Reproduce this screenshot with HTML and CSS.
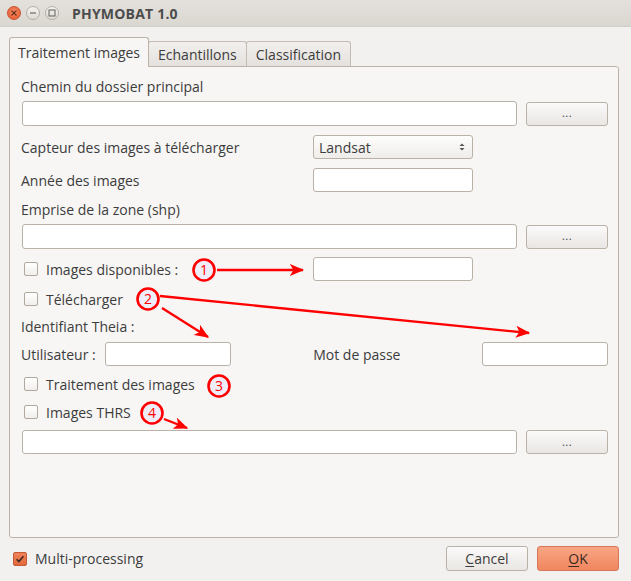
FILE: index.html
```html
<!DOCTYPE html>
<html lang="fr">
<head>
<meta charset="utf-8">
<title>PHYMOBAT 1.0</title>
<link rel="stylesheet" href="styles.css">
</head>
<body>
<div class="window">
  <div class="titlebar">
    <div class="wbtns">
      <span class="wbtn close"><svg width="14" height="14" viewBox="0 0 14 14"><path d="M4.5 4.5l5 5M9.5 4.5l-5 5" stroke="#5a2a1a" stroke-width="1.3" stroke-linecap="round"/></svg></span>
      <span class="wbtn"><svg width="14" height="14" viewBox="0 0 14 14"><path d="M3.5 7h7" stroke="#5a5752" stroke-width="1.2"/></svg></span>
      <span class="wbtn"><svg width="14" height="14" viewBox="0 0 14 14"><rect x="3.5" y="3.5" width="7" height="7" fill="none" stroke="#5a5752" stroke-width="1.1"/></svg></span>
    </div>
    <div class="title">PHYMOBAT 1.0</div>
  </div>

  <div class="body">
    <div class="tabs">
      <div class="tab active">Traitement images</div>
      <div class="tab">Echantillons</div>
      <div class="tab">Classification</div>
    </div>
    <div class="panel">
      <div class="row lbl r1">Chemin du dossier principal</div>
      <div class="row field r2">
        <div class="input wide"></div>
        <div class="button dots">...</div>
      </div>
      <div class="row field r3">
        <div class="lcol">Capteur des images à télécharger</div>
        <div class="combo">Landsat<span class="spin"><svg width="8" height="12" viewBox="0 0 8 12"><path d="M1.5 5L4 2.5 6.5 5z" fill="#555"/><path d="M1.5 7L4 9.5 6.5 7z" fill="#555"/></svg></span></div>
      </div>
      <div class="row field r4">
        <div class="lcol">Année des images</div>
        <div class="input mid"></div>
      </div>
      <div class="row lbl r5">Emprise de la zone (shp)</div>
      <div class="row field r6">
        <div class="input wide"></div>
        <div class="button dots">...</div>
      </div>
      <div class="row field r7">
        <div class="lcol"><span class="cb"></span>Images disponibles :</div>
        <div class="input mid"></div>
      </div>
      <div class="row lbl r8"><span class="cb"></span>Télécharger</div>
      <div class="row lbl r9">Identifiant Theia :</div>
      <div class="row field r10">
        <div class="ucol">Utilisateur :</div>
        <div class="input small"></div>
        <div class="mcol">Mot de passe</div>
        <div class="input small"></div>
      </div>
      <div class="row lbl r11"><span class="cb"></span>Traitement des images</div>
      <div class="row lbl r12"><span class="cb"></span>Images THRS</div>
      <div class="row field r13">
        <div class="input wide"></div>
        <div class="button dots">...</div>
      </div>
    </div>

    <div class="footer">
      <div class="multi"><span class="cb checked"><svg width="14" height="14" viewBox="0 0 14 14"><path d="M3 7.2l2.7 2.8L11 3.8" fill="none" stroke="#3b2a22" stroke-width="1.8"/></svg></span>Multi-processing</div>
      <div class="actions">
        <div class="button dlg"><span class="u">C</span>ancel</div>
        <div class="button dlg ok"><span class="u">O</span>K</div>
      </div>
    </div>
  </div>

  <svg class="annot" width="631" height="581" viewBox="0 0 631 581">
    <defs>
      <marker id="ah" viewBox="0 0 12 10" refX="11" refY="5" markerWidth="6" markerHeight="5" orient="auto" markerUnits="strokeWidth">
        <path d="M0 0L12 5 0 10 3 5z" fill="#f00"/>
      </marker>
    </defs>
    <g stroke="#f00" stroke-width="2.4" fill="none" marker-end="url(#ah)">
      <line x1="217" y1="270" x2="303" y2="270"/>
      <line x1="160" y1="296" x2="529" y2="333"/>
      <line x1="162" y1="308" x2="208" y2="337"/>
      <line x1="164" y1="419" x2="187" y2="428"/>
    </g>
    <g stroke="#f00" stroke-width="2.6" fill="#eeeefa">
      <circle cx="204" cy="270" r="10.5"/>
      <circle cx="148" cy="299" r="10.5"/>
      <circle cx="219" cy="386" r="10.5"/>
      <circle cx="152" cy="413" r="10.5"/>
    </g>
    <g fill="#f00" font-family="Open Sans, sans-serif" font-size="14" text-anchor="middle">
      <text x="204" y="275">1</text>
      <text x="148" y="304">2</text>
      <text x="219" y="391">3</text>
      <text x="152" y="418">4</text>
    </g>
  </svg>
</div>
</body>
</html>
```
FILE: styles.css
```css
* { box-sizing: border-box; }
html, body { margin: 0; padding: 0; }
body {
  width: 631px;
  height: 581px;
  overflow: hidden;
  background: #f2f1f0;
  font-family: "Open Sans", "Noto Sans", sans-serif;
  font-size: 14px;
  color: #3c3c3c;
}
.window { position: relative; width: 631px; height: 581px; }

.titlebar {
  height: 27px;
  display: flex;
  align-items: center;
  background: linear-gradient(#e4e1dc, #dad6d0);
  border-bottom: 1px solid #d2cec8;
}
.wbtns { display: flex; gap: 5px; margin-left: 7px; }
.wbtn {
  width: 14px; height: 14px;
  border-radius: 50%;
  border: 1px solid #b3aea6;
  background: linear-gradient(#f4f2ef, #dedbd6);
  display: flex; align-items: center; justify-content: center;
}
.wbtn svg { display: block; }
.wbtn.close {
  background: radial-gradient(circle at 50% 40%, #f58a63, #e4582c);
  border-color: #c9502c;
}
.title {
  margin-left: 13px;
  font-weight: bold;
  color: #4c4c4c;
  font-size: 14px;
  letter-spacing: 0.2px;
}

.body { padding: 10px 12px 0 9px; }

.tabs { display: flex; align-items: flex-end; height: 29px; }
.tab {
  height: 25px;
  padding: 0 9px;
  display: flex; align-items: center;
  border: 1px solid #c4bcb3;
  border-bottom: none;
  border-radius: 3px 3px 0 0;
  background: linear-gradient(#f2f0ee, #e4e1dd);
  margin-left: -1px;
}
.tab.active {
  height: 30px;
  margin-left: 0;
  margin-bottom: -1px;
  background: #f7f6f5;
  border-color: #bcb2a7;
  padding: 0 8px;
  position: relative;
  z-index: 1;
}

.panel {
  height: 472px;
  border: 1px solid #bcb2a7;
  border-radius: 0 3px 3px 3px;
  background: #f7f6f5;
  padding: 8px 10px 0 11px;
  display: flex;
  flex-direction: column;
}
.row { display: flex; align-items: center; }
.lbl { height: 22px; }
.field { height: 24px; }
.r1 { margin-top: 0; }
.r2 { margin-top: 4px; height: 25px; }
.r3 { margin-top: 9px; }
.r4 { margin-top: 9px; }
.r5 { margin-top: 6px; }
.r6 { margin-top: 4px; height: 25px; }
.r7 { margin-top: 8px; }
.r8 { margin-top: 7px; }
.r9 { margin-top: 5px; }
.r10 { margin-top: 5px; }
.r11 { margin-top: 7px; }
.r12 { margin-top: 6px; }
.r13 { margin-top: 7px; }

.lcol { width: 292px; display: flex; align-items: center; }
.ucol { width: 84px; }
.mcol { width: 169px; margin-left: 82px; }

.input {
  height: 100%;
  background: #fff;
  border: 1px solid #bab1a7;
  border-radius: 3px;
}
.input.wide { width: 496px; margin-left: 1px; }
.input.mid { width: 160px; }
.input.small { width: 127px; }

.button {
  display: flex; align-items: center; justify-content: center;
  border: 1px solid #bab1a7;
  border-radius: 3px;
  background: linear-gradient(#fbfafa, #e9e6e3);
  color: #3c3c3c;
}
.button.dots {
  width: 82px; height: 24px;
  margin-left: 9px;
  font-size: 11px;
  letter-spacing: 0.5px;
  padding-bottom: 2px;
}
.combo {
  width: 160px; height: 24px;
  border: 1px solid #bab1a7;
  border-radius: 3px;
  background: linear-gradient(#fdfdfc, #efedea);
  display: flex; align-items: center; justify-content: space-between;
  padding: 0 6px 0 5px;
}
.spin svg { display: block; }

.cb {
  width: 14px; height: 14px;
  border: 1px solid #b1a89e;
  border-radius: 2px;
  background: linear-gradient(#ffffff, #f1efec);
  margin: 0 8px 0 3px;
  flex: none;
}
.cb.checked {
  background: linear-gradient(#f0825a, #e06a3d);
  border-color: #c65a32;
  margin: 0 8px 0 0;
  display: flex; align-items: center; justify-content: center;
}
.cb.checked svg { display: block; }

.footer {
  display: flex;
  align-items: center;
  justify-content: space-between;
  margin-top: 8px;
  padding-left: 4px;
}
.multi { display: flex; align-items: center; }
.actions { display: flex; gap: 9px; }
.button.dlg { width: 82px; height: 25px; font-size: 14px; }
.button.ok {
  background: linear-gradient(#f8a683, #f0865f);
  border-color: #d6775a;
  color: #3a2a22;
}
.u { text-decoration: underline; text-underline-offset: 2px; }

.annot { position: absolute; left: 0; top: 0; pointer-events: none; }
```
